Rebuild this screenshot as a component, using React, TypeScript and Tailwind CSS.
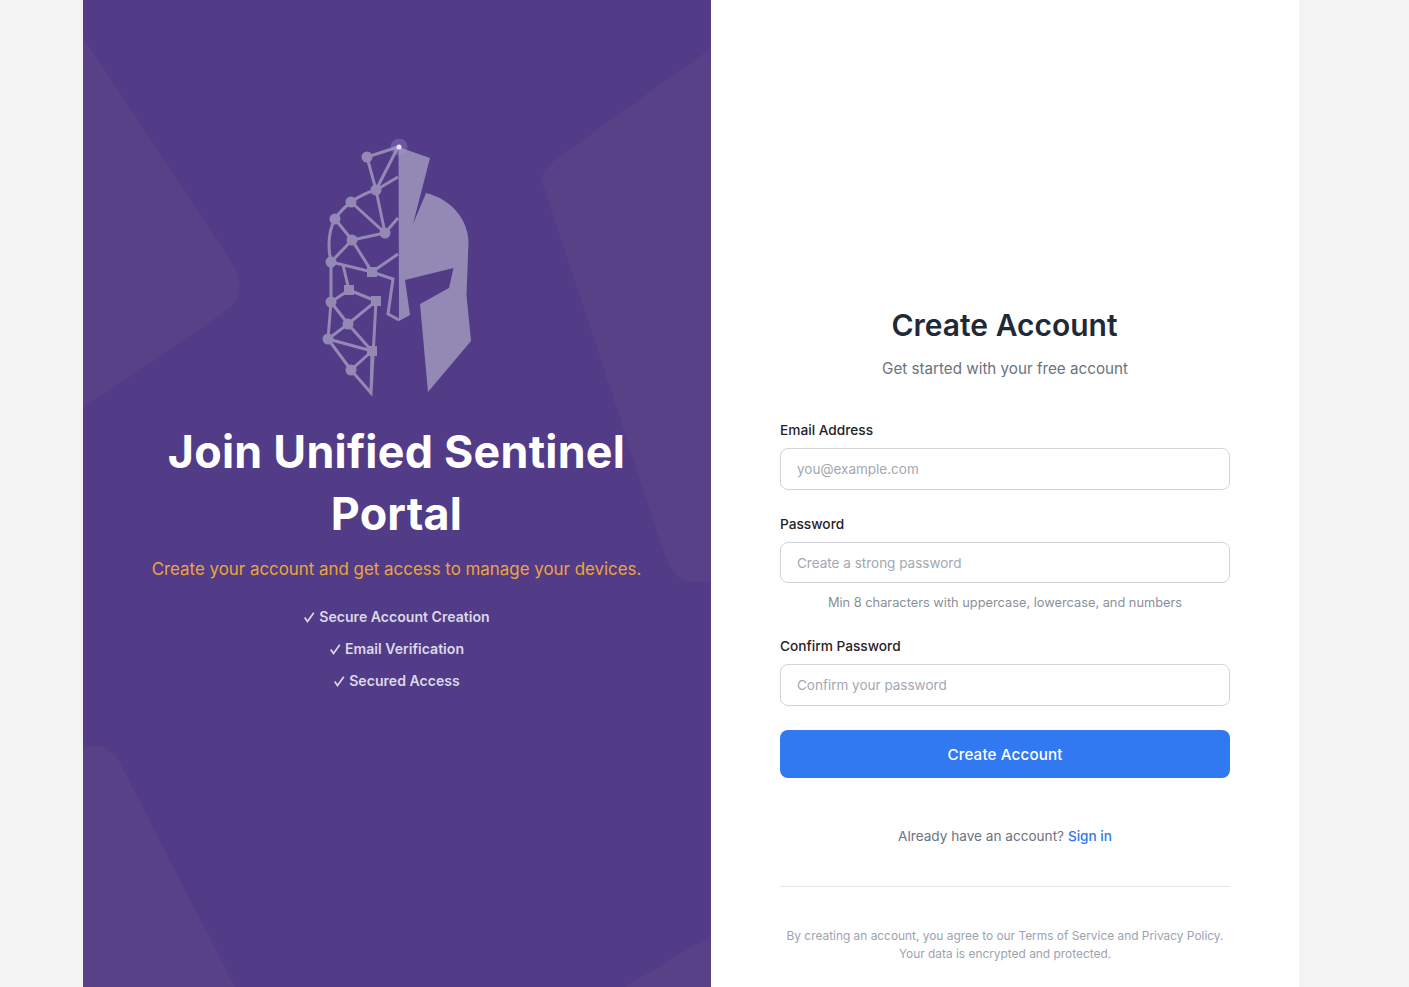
const nodes: [number, number, number][] = [
  [367, 157, 5.500], [376, 190, 5.500], [351, 202, 5.500], [335, 219, 5.500], [352, 240, 5.500], [385, 233, 5.500],
  [331, 262, 5.500], [331, 302, 5.500], [348, 324, 5.500], [328, 339, 5.500], [351, 370, 5.500],
];
const squares: [number, number][] = [[372, 272], [376, 301], [372, 351], [349, 290]];

const Logo = () => (
  <svg viewBox="320 135 155 265" className="w-[155px] h-[265px] shrink-0">
    <g fill="#9489b4">
      <path d="M398.500 147 L430 158 L413 224 L426 193 C451 199 468 219 468.500 242 L466.500 295 L471 341 L428 392 L420 304 L449 288 L453.500 268 L405 280 L410 315 L399 321 Z" />
      {nodes.map(([x, y, r], i) => (
        <circle key={i} cx={x} cy={y} r={r} />
      ))}
      {squares.map(([x, y], i) => (
        <rect key={i} x={x - 5} y={y - 5} width="10" height="10" />
      ))}
    </g>
    <g fill="none" stroke="#9489b4" strokeWidth="3">
      <path d="M398 147 L367 157 L376 190 L398 147 M376 190 L398 177 M376 190 L385 233 L398 218 M376 190 C365 193 358 197 351 202 C345 207 339 212 335 219 C328 232 328 248 331 262 L331 302 L328 339 L351 370 L371 393 L376 301 L348 324 L331 302 L349 290 L376 301 M351 202 L385 233 L352 240 L335 219 M352 240 L331 262 L372 272 L352 240 M372 272 L398 254 M372 272 L393 279 L388 314 L399 320 M343 265 L349 290 M348 324 L328 339 L372 351 L348 324 M372 351 L351 370 M372 351 L371 393" />
    </g>
    <circle cx="399" cy="147" r="8.500" fill="#a99de0" opacity="0.3" />
    <circle cx="399" cy="147" r="2.500" fill="#e9e5ff" />
  </svg>
);

const Shapes = () => (
  <svg viewBox="83 0 628 987" className="absolute inset-0 w-full h-full">
    <g fill="#594187">
      <path d="M83 37 L230 260 Q252 293 223 313 L83 408 Z" />
      <path d="M711 48 L555 160 Q535 175 545 190 L664 553 Q674 582 696 582 L711 582 Z" />
      <path d="M83 747 Q93 745 100 746 Q113 749 120 763 L235 987 L83 987 Z" />
      <path d="M711 935 L625 987 L711 987 Z" />
    </g>
  </svg>
);

const Feature = ({ text }: { text: string }) => (
  <div className="flex items-center justify-center gap-[4px] text-[14.100px] leading-[32px] font-semibold text-[#dcd8e7]">
    <svg viewBox="0 0 11 11" className="w-[11px] h-[11px]" fill="none" stroke="#dcd8e7" strokeWidth="1.700">
      <path d="M0.700 5.500 L3.500 9.500 L9.800 0.800" />
    </svg>
    <span>{text}</span>
  </div>
);

const Field = ({ label, placeholder, h = "h-[42px]" }: { label: string; placeholder: string; h?: string }) => (
  <div>
    <label className="block text-[13.700px] leading-[20px] font-medium text-[#1f2328] mb-2">{label}</label>
    <input
      placeholder={placeholder}
      className={`w-full ${h} px-4 text-[13.500px] border border-[#d1d5db] rounded-lg bg-white placeholder:text-[#a3a8b1]`}
    />
  </div>
);

export default function App() {
  return (
    <div className="min-h-[987px] bg-[#f3f3f3] font-['Inter',sans-serif]">
      <div className="ml-[83px] w-[1216px] h-[987px] flex overflow-hidden">
        <div className="relative w-[628px] bg-[#523b87] flex flex-col items-center overflow-hidden pt-[135px]">
          <Shapes />
          <div className="relative flex flex-col items-center text-center">
            <Logo />
            <h1 className="mt-[21px] mr-[1px] w-[500px] text-[44.800px] tracking-[0.25px] leading-[62px] font-bold text-white">
              Join Unified Sentinel Portal
            </h1>
            <p className="mt-[11px] mr-[1px] text-[16.900px] leading-[26px] text-[#eba63c]">
              Create your account and get access to manage your devices.
            </p>
            <div className="mt-[19px]">
              <Feature text="Secure Account Creation" />
              <Feature text="Email Verification" />
              <Feature text="Secured Access" />
            </div>
          </div>
        </div>
        <div className="w-[588px] bg-white flex flex-col items-center pt-[304px]">
          <div className="w-[450px]">
            <h2 className="text-center pr-[1px] text-[30px] leading-[42px] font-semibold text-[#1f2937]">Create Account</h2>
            <p className="mt-[11px] text-center text-[15.200px] leading-[24px] text-[#6b7280]">Get started with your free account</p>
            <div className="mt-[39px]">
              <Field label="Email Address" placeholder="you@example.com" />
            </div>
            <div className="mt-[24px]">
              <Field label="Password" placeholder="Create a strong password" h="h-[41px]" />
              <p className="mt-[11px] text-center text-[12.800px] leading-[18px] text-[#8a9099]">
                Min 8 characters with uppercase, lowercase, and numbers
              </p>
            </div>
            <div className="mt-[24px]">
              <Field label="Confirm Password" placeholder="Confirm your password" />
            </div>
            <button className="mt-[24px] w-full h-[48px] pt-[2px] rounded-lg bg-[#3179f1] text-white text-[15.200px] tracking-[0.14px] font-medium">
              Create Account
            </button>
            <p className="mt-[48px] text-center text-[13.600px] leading-[20px] text-[#6b7280]">
              Already have an account? <a className="text-[#2f76ea] font-medium">Sign in</a>
            </p>
            <div className="mt-[40px] border-t border-[#e5e7eb] pt-[40px] text-center text-[11.900px] leading-[18px] text-[#9ca3af]">
              <p>By creating an account, you agree to our Terms of Service and Privacy Policy.</p>
              <p>Your data is encrypted and protected.</p>
            </div>
          </div>
        </div>
      </div>
    </div>
  );
}
